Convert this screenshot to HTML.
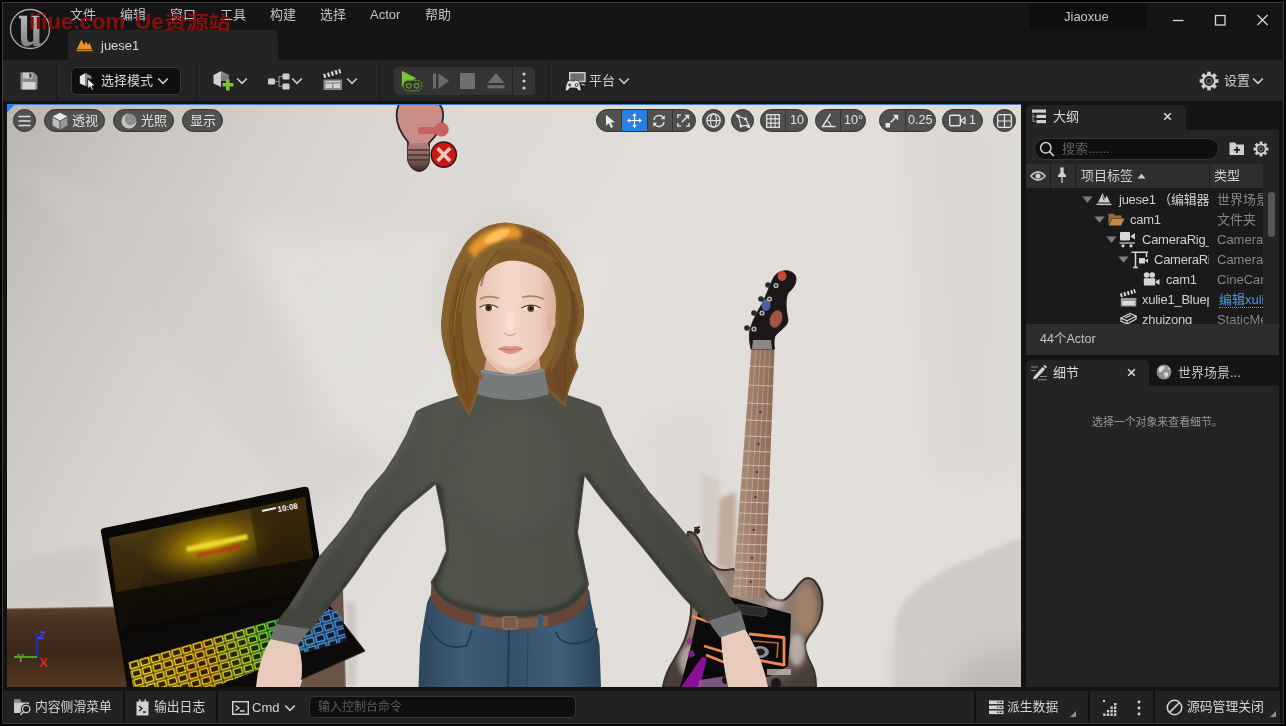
<!DOCTYPE html>
<html><head><meta charset="utf-8"><title>juese1 - Unreal Editor</title>
<style>
*{box-sizing:border-box;margin:0;padding:0}
html,body{width:1286px;height:726px;overflow:hidden;background:#000}
body{font-family:"Liberation Sans","Noto Sans CJK SC",sans-serif;font-size:13px;color:#c0c0c0;position:relative}
.abs{position:absolute}
#win{position:absolute;left:2px;top:2px;width:1282px;height:722px;background:#131313;border:1px solid #3a3a3a}
#title{position:absolute;left:3px;top:3px;width:1280px;height:58px;background:#151515}
#toolbar{position:absolute;left:3px;top:60px;width:1280px;height:41px;background:#242424}
.t{position:absolute;white-space:nowrap;line-height:1;will-change:transform}
svg{position:absolute;overflow:visible}
.m{top:8px;font-size:13px;color:#c4c4c4}
.sep{top:62px;width:1px;height:38px;background:#161616}
.chev path{fill:none;stroke:#cfcfcf;stroke-width:1.6}
.hd{top:164px;width:1px;height:24px;background:#1c1c1c}
.r{font-size:13px;color:#d0d0d0;letter-spacing:-0.25px}
.ty{font-size:13px;color:#868686;letter-spacing:0}
.bs{top:691px;width:2px;height:32px;background:#111}
.pill{top:109px;height:23px;background:#50504e;border:1px solid #353533;border-radius:11.5px}
.pt{top:114px;font-size:13px;color:#e2e2e2}
.pd{top:-1px;width:1px;height:23px;background:#363634}
</style></head><body>
<div id="win"></div>
<div id="title"></div>
<div id="toolbar"></div>

<div id="menu">
<span class="t m" style="left:70px">文件</span><span class="t m" style="left:120px">编辑</span><span class="t m" style="left:170px">窗口</span><span class="t m" style="left:220px">工具</span><span class="t m" style="left:270px">构建</span><span class="t m" style="left:320px">选择</span><span class="t m" style="left:370px">Actor</span><span class="t m" style="left:425px">帮助</span>
</div>
<div class="abs" style="left:68px;top:30px;width:210px;height:31px;background:#242424;border-radius:5px 5px 0 0"></div>
<svg style="left:76px;top:38px" width="17" height="14" viewBox="0 0 17 14"><path d="M1 11 L5.5 1.5 L8 7 L10 3.5 L12 7 L13.5 5 L16 11 Z" fill="#f0922c"/><rect x="0.5" y="11.6" width="16" height="1.6" fill="#c8901c"/></svg>
<span class="t" style="left:101px;top:39px;font-size:13px;color:#d6d6d6">juese1</span>
<!-- UE logo -->
<svg style="left:9px;top:8px" width="42" height="42" viewBox="0 0 42 42"><defs><linearGradient id="lg1" x1="0" y1="0" x2="0" y2="1"><stop offset="0" stop-color="#e8e8e8"/><stop offset="1" stop-color="#6a6a6a"/></linearGradient></defs><circle cx="21" cy="21" r="19.5" fill="#151515" stroke="#a8a8a8" stroke-width="1.3"/><text x="0" y="0" font-family="Liberation Serif, serif" font-weight="bold" font-size="46" text-anchor="middle" fill="url(#lg1)" transform="translate(21.5 38) scale(0.95 1.42)">u</text></svg>
<span class="t" id="wm" style="left:29px;top:11px;font-size:22.2px;font-weight:bold;color:#8a0d0d;letter-spacing:0px">iiiue.com<span style="display:inline-block;width:10px"></span>Ue<span style="display:inline-block;transform:scale(1.02,0.8);transform-origin:0 82%;letter-spacing:-0.6px">资源站</span></span>
<!-- user box -->
<div class="abs" style="left:1029px;top:3px;width:118px;height:28px;background:#0f0f0f;border-radius:0 0 6px 6px"></div>
<span class="t" style="left:1064px;top:10px;font-size:13px;color:#c8c8c8">Jiaoxue</span>
<svg style="left:1170px;top:10px" width="110" height="20" viewBox="0 0 110 20"><g stroke="#d8d8d8" stroke-width="1.3" fill="none"><path d="M3 10.5 H13.5"/><rect x="45.5" y="5.5" width="9.5" height="9.5"/><path d="M87.5 5 L97.5 15 M97.5 5 L87.5 15"/></g></svg>


<!-- save -->
<svg style="left:20px;top:72px" width="18" height="18" viewBox="0 0 18 18"><path d="M0.5 0.5 H14 L17.5 4 V17.5 H0.5 Z" fill="#8a8a8a"/><rect x="3" y="0.5" width="9.5" height="6" fill="#c9c9c9"/><rect x="9.3" y="1.5" width="2.2" height="4" fill="#3a3a3a"/><rect x="2.5" y="10" width="13" height="7.5" fill="#d4d4d4"/></svg>
<div class="abs sep" style="left:56px"></div>
<div class="abs" style="left:71px;top:67px;width:110px;height:28px;background:#0f0f0f;border:1px solid #3a3a3a;border-radius:5px"></div>
<svg style="left:79px;top:72px" width="18" height="19" viewBox="0 0 18 19"><path d="M0.8 4.2 L6.5 1 V14 L0.8 11.4 Z" fill="#e6e6e4"/><path d="M6.5 1 L12.4 4 V7.5 L8.5 5.5 V14 H6.5 Z" fill="#8e8e8c"/><path d="M8.8 6.8 L8.8 16.8 L11.2 14.6 L12.8 18.2 L14.4 17.5 L12.8 14 L16 13.8 Z" fill="#fff" stroke="#111" stroke-width="0.8"/></svg>
<span class="t" style="left:101px;top:74px;font-size:13px;color:#d8d8d8">选择模式</span>
<svg class="chev" style="left:157px;top:77px" width="12" height="8" viewBox="0 0 12 8"><path d="M1.2 1.5 L6 6.3 L10.8 1.5"/></svg>
<div class="abs sep" style="left:196px"></div>
<!-- add -->
<svg style="left:213px;top:70px" width="21" height="21" viewBox="0 0 21 21"><path d="M0.5 5 L8 1 V17 L0.5 13.5 Z" fill="#d0d0d0"/><path d="M8 1 L16 5 V10 H8 Z" fill="#8a8a8a"/><path d="M8 5.5 H16 V11 H8 Z" fill="#7a7a7a"/><path d="M13 9.5 H16.5 V13 H20.5 V16.5 H16.5 V20.5 H13 V16.5 H9.5 V13 H13 Z" fill="#7ec23c"/></svg>
<svg class="chev" style="left:236px;top:77px" width="12" height="8" viewBox="0 0 12 8"><path d="M1.2 1.5 L6 6.3 L10.8 1.5"/></svg>
<!-- blueprint -->
<svg style="left:268px;top:73px" width="22" height="17" viewBox="0 0 22 17"><path d="M7 8.5 H11 M11 3.5 V13.5 M11 3.5 H15 M11 13.5 H15" stroke="#8a8a8a" stroke-width="1.2" fill="none"/><rect x="0" y="5.5" width="7" height="6" rx="1.2" fill="#cfcfcf"/><rect x="14.5" y="0.5" width="7" height="6" rx="1.2" fill="#cfcfcf"/><rect x="14.5" y="10.5" width="7" height="6" rx="1.2" fill="#cfcfcf"/></svg>
<svg class="chev" style="left:291px;top:77px" width="12" height="8" viewBox="0 0 12 8"><path d="M1.2 1.5 L6 6.3 L10.8 1.5"/></svg>
<!-- clapboard -->
<svg style="left:323px;top:71px" width="20" height="19" viewBox="0 0 20 19"><rect x="0.5" y="8.5" width="18.5" height="10.5" fill="#8a8a8a"/><rect x="2.5" y="12.5" width="6.5" height="4.5" fill="#d2d2d2"/><rect x="10.5" y="12.5" width="6.5" height="4.5" fill="#d2d2d2"/><rect x="2.5" y="10" width="14.5" height="1.2" fill="#d2d2d2"/><g fill="#d8d8d8" transform="rotate(-17 0.5 8)"><rect x="1.5" y="3.2" width="2.2" height="4.3"/><rect x="5.5" y="3.2" width="2.2" height="4.3"/><rect x="9.5" y="3.2" width="2.2" height="4.3"/><rect x="13.5" y="3.2" width="2.2" height="4.3"/><rect x="17.3" y="3.2" width="2" height="4.3"/></g></svg>
<svg class="chev" style="left:346px;top:77px" width="12" height="8" viewBox="0 0 12 8"><path d="M1.2 1.5 L6 6.3 L10.8 1.5"/></svg>
<div class="abs sep" style="left:379px"></div>
<!-- play group -->
<div class="abs" style="left:394px;top:67px;width:141px;height:28px;background:#343432;border-radius:5px"></div>
<div class="abs" style="left:512px;top:67px;width:1px;height:28px;background:#242424"></div>
<svg style="left:401px;top:70px" width="22" height="22" viewBox="0 0 22 22"><path d="M0.8 0.7 L15.2 8.3 L0.8 16.5 Z" fill="#7cc13a"/><rect x="2" y="10.3" width="19" height="10.6" rx="5.3" fill="#343432" stroke="#6fb431" stroke-width="1" stroke-dasharray="2.2 1"/><circle cx="7.7" cy="15.7" r="2.3" fill="none" stroke="#7cc13a" stroke-width="1.5" stroke-dasharray="0.9 0.55"/><circle cx="15.6" cy="15.7" r="2.3" fill="none" stroke="#7cc13a" stroke-width="1.5" stroke-dasharray="0.9 0.55"/></svg>
<svg style="left:432px;top:72px" width="18" height="18" viewBox="0 0 18 18"><rect x="1" y="1.5" width="3" height="15" fill="#6c6c6c"/><path d="M6.5 1.5 L17 9 L6.5 16.5 Z" fill="#6c6c6c"/></svg>
<div class="abs" style="left:460px;top:73px;width:15px;height:16px;background:#707070"></div>
<svg style="left:487px;top:72px" width="18" height="18" viewBox="0 0 18 18"><path d="M9 1 L17.5 11 H0.5 Z" fill="#6c6c6c"/><rect x="0.5" y="13.2" width="17" height="3.2" fill="#6c6c6c"/></svg>
<svg style="left:521px;top:71px" width="6" height="20" viewBox="0 0 6 20"><circle cx="3" cy="3" r="1.6" fill="#d0d0d0"/><circle cx="3" cy="10" r="1.6" fill="#d0d0d0"/><circle cx="3" cy="17" r="1.6" fill="#d0d0d0"/></svg>
<div class="abs sep" style="left:548px"></div>
<!-- platform -->
<svg style="left:565px;top:71px" width="21" height="21" viewBox="0 0 21 21"><rect x="4.7" y="1.7" width="15.3" height="8.8" fill="#6e6e6c" stroke="#d0d0d0" stroke-width="1.4"/><path d="M16.5 13.2 L20 14" stroke="#d0d0d0" stroke-width="1.2"/><path d="M3.8 9.6 Q6 8.6 7.5 10 H9 Q10.5 8.6 12.8 9.6 Q14.6 10.5 15.2 14 L16 18.4 Q15.6 20.6 13.6 19.6 L11.4 17 H5 L2.8 19.6 Q0.8 20.6 0.4 18.4 L1.2 14 Q1.8 10.5 3.8 9.6 Z" fill="#e0e0de" stroke="#242424" stroke-width="0.8"/><path d="M3 14 H6.4 M4.7 12.3 V15.7" stroke="#2a2a2a" stroke-width="1"/><circle cx="11.6" cy="14" r="1.5" fill="none" stroke="#2a2a2a" stroke-width="0.9"/></svg>
<span class="t" style="left:589px;top:74px;font-size:13px;color:#d0d0d0">平台</span>
<svg class="chev" style="left:618px;top:77px" width="12" height="8" viewBox="0 0 12 8"><path d="M1.2 1.5 L6 6.3 L10.8 1.5"/></svg>
<!-- settings -->
<svg style="left:1199px;top:71px" width="20" height="20" viewBox="-11 -11 22 22"><g fill="#cfcfcf"><g id="teeth"><rect x="-2" y="-10.3" width="4" height="4.5"/><rect x="-2" y="5.8" width="4" height="4.5"/></g><use href="#teeth" transform="rotate(45)"/><use href="#teeth" transform="rotate(90)"/><use href="#teeth" transform="rotate(135)"/></g><circle r="6.6" fill="none" stroke="#cfcfcf" stroke-width="2.4"/><circle r="3" fill="none" stroke="#8a8a8a" stroke-width="1"/></svg>
<span class="t" style="left:1224px;top:74px;font-size:13px;color:#d0d0d0">设置</span>
<svg class="chev" style="left:1252px;top:77px" width="12" height="8" viewBox="0 0 12 8"><path d="M1.2 1.5 L6 6.3 L10.8 1.5"/></svg>


<div class="abs" style="left:7px;top:104px;width:1014px;height:583px;overflow:hidden;background:#dcdad6">
<svg style="left:0;top:0" width="1014" height="583" viewBox="7 104 1014 583">
<defs>
<linearGradient id="wall" gradientUnits="userSpaceOnUse" x1="7" y1="104" x2="883" y2="586"><stop offset="0" stop-color="#b9b6b1"/><stop offset="0.14" stop-color="#cac7c3"/><stop offset="0.28" stop-color="#d7d4d0"/><stop offset="0.42" stop-color="#dddad6"/><stop offset="0.6" stop-color="#e1deda"/><stop offset="1" stop-color="#e2dfdb"/></linearGradient>
<filter id="b2" x="-20%" y="-20%" width="140%" height="140%"><feGaussianBlur stdDeviation="2"/></filter>
<filter id="b1" x="-20%" y="-20%" width="140%" height="140%"><feGaussianBlur stdDeviation="0.8"/></filter>
<filter id="b6" x="-30%" y="-30%" width="160%" height="160%"><feGaussianBlur stdDeviation="6"/></filter>
<filter id="b15" x="-50%" y="-50%" width="200%" height="200%"><feGaussianBlur stdDeviation="15"/></filter>
</defs>
<rect x="7" y="104" width="1014" height="583" fill="url(#wall)"/>

<g id="wallshade">
<path d="M893 700 L895 625 C 900 585 950 566 1030 534 L1030 700 Z" fill="#cbc8c4" opacity="0.8" filter="url(#b2)"/>
<ellipse cx="1020" cy="690" rx="70" ry="40" fill="#b4aca4" opacity="0.6" filter="url(#b15)"/>
<path d="M886 640 L940 640 L940 687 L886 687 Z" fill="#d2cfcb" opacity="0.5" filter="url(#b6)"/>

<path d="M20 170 L235 232 L380 470 L300 520 Z" fill="#cfccc8" opacity="0.35" filter="url(#b6)"/>
<path d="M240 230 L620 250 L560 420 L330 440 Z" fill="#e6e4e0" opacity="0.5" filter="url(#b15)"/>
<path d="M7 560 L100 545 L100 608 L7 608 Z" fill="#c6c3bf" opacity="0.55" filter="url(#b6)"/>
<path d="M900 104 L1021 104 L1021 480 L930 480 Z" fill="#d6d3cf" opacity="0.5" filter="url(#b15)"/>
<path d="M640 420 L720 400 L735 560 L660 600 Z" fill="#d4d1cd" opacity="0.3" filter="url(#b15)"/>
</g>


<g id="table">
<defs><linearGradient id="tb" x1="0" y1="0" x2="0" y2="1"><stop offset="0" stop-color="#5a4030"/><stop offset="0.2" stop-color="#46301f"/><stop offset="0.6" stop-color="#3c2719"/><stop offset="1" stop-color="#553920"/></linearGradient></defs>
<path d="M7 609 L122 607 L135 687 L7 687 Z" fill="url(#tb)"/>
<path d="M7 609 L122 607" stroke="#7a6050" stroke-width="1.5" opacity="0.7"/>
<path d="M328 600 L343 590 L346 687 L300 687 Z" fill="#6a5446"/>
<path d="M346 600 L356 604 L356 687 L346 687 Z" fill="#c4c0bb" opacity="0.7" filter="url(#b2)"/>
</g>


<g id="laptop">
<defs>
<linearGradient id="scr" x1="0" y1="0" x2="0.25" y2="1"><stop offset="0" stop-color="#5a4610"/><stop offset="0.3" stop-color="#4a3810"/><stop offset="0.62" stop-color="#2e220c"/><stop offset="1" stop-color="#120e06"/></linearGradient>
<radialGradient id="glow" cx="0.5" cy="0.5" r="0.5"><stop offset="0" stop-color="#e8c800" stop-opacity="0.95"/><stop offset="0.5" stop-color="#a88400" stop-opacity="0.6"/><stop offset="1" stop-color="#6a5000" stop-opacity="0"/></radialGradient>
<linearGradient id="kb" gradientUnits="userSpaceOnUse" x1="128" y1="670" x2="340" y2="615"><stop offset="0" stop-color="#ffe020"/><stop offset="0.35" stop-color="#ffc020"/><stop offset="0.55" stop-color="#b8e030"/><stop offset="0.68" stop-color="#60e040"/><stop offset="0.8" stop-color="#50a0e0"/><stop offset="1" stop-color="#4a90f0"/></linearGradient>
<pattern id="keys" width="11" height="9" patternUnits="userSpaceOnUse" patternTransform="rotate(-14) skewX(-28)"><rect x="1.2" y="1.2" width="8.6" height="6.6" fill="#0c0a08" stroke="url(#kb)" stroke-width="1.4"/></pattern>
</defs>
<!-- base -->
<path d="M119 634 L292 596 L330 606 L365 651 L300 680 L296 687 L127 687 Z" fill="#0d0b0a"/>
<path d="M330 606 L365 651 L300 680" stroke="#2a2724" stroke-width="1" fill="none"/>
<!-- keyboard area: gradient-lit keys -->
<pattern id="keyring" width="11" height="8.8" patternUnits="userSpaceOnUse" patternTransform="matrix(0.960 -0.279 0.243 0.970 128 662)"><rect x="1.3" y="1.3" width="8.4" height="6.2" fill="none" stroke="#fff" stroke-width="1.5"/></pattern>
<mask id="kmask" maskUnits="userSpaceOnUse" x="100" y="590" width="280" height="100"><path d="M128 662 L283 617 L318 606 L340 612 L347 641 L300 654 L215 687 L133 687 Z" fill="url(#keyring)"/></mask>
<path d="M128 662 L283 617 L318 606 L340 612 L347 641 L300 654 L215 687 L133 687 Z" fill="url(#kb)" mask="url(#kmask)"/>
<path d="M128 662 L283 617 L318 606 L340 612 L347 641 L300 654 L215 687 L133 687 Z" fill="url(#kb)" opacity="0.12"/>
<!-- screen bezel -->
<path d="M101 532 Q100 529 104 528 L303 487 Q308 486 309 490 L321 566 L296 597 L119 637 Z" fill="#0a0908"/>
<!-- display -->
<path d="M109 538 L305 497 L315 572 L293 592 L121 631 Z" fill="url(#scr)"/>
<ellipse cx="210" cy="545" rx="72" ry="32" fill="url(#glow)" transform="rotate(-11 210 545)"/>
<path d="M109 538 L150 560 L121 631 Z" fill="#3a2c0c" opacity="0.5"/>
<path d="M250 509 L305 497 L313 560 L262 580 Z" fill="#2a1e08" opacity="0.55"/>
<path d="M186 547 L247 534 L248 539 L187 552 Z" fill="#f0d830" filter="url(#b1)"/>
<path d="M196 553 L240 544 L241 549 L197 558 Z" fill="#b03018" opacity="0.7" filter="url(#b1)"/>
<path d="M116 592 L314 558 L315 572 L293 592 L121 631 Z" fill="#0c0a06" opacity="0.8"/>
<text x="278" y="512" font-size="8" font-weight="bold" fill="#f4f4f4" transform="rotate(-10 278 512)" font-family="Liberation Sans, sans-serif">10:08</text>
<path d="M262 511 L276 508" stroke="#e8e8e8" stroke-width="2"/>
</g>


<g id="guitar">
<defs>
<linearGradient id="neck" x1="0" y1="0" x2="1" y2="0"><stop offset="0" stop-color="#b09684"/><stop offset="0.45" stop-color="#a07e6a"/><stop offset="1" stop-color="#8c6a58"/></linearGradient>
<radialGradient id="gbody" cx="0.5" cy="0.45" r="0.6"><stop offset="0" stop-color="#9a8a80"/><stop offset="0.7" stop-color="#857469"/><stop offset="1" stop-color="#4a3e38"/></radialGradient>
</defs>
<!-- stand / shadow behind neck -->
<path d="M719 498 L736 492 L735 572 L716 566 Z" fill="#b99c8a" opacity="0.75" filter="url(#b2)"/>
<path d="M700 470 L720 480 L716 560 L702 560 Z" fill="#cfc6be" opacity="0.6" filter="url(#b2)"/>
<!-- body -->
<path d="M688 532 C694 531 699 538 701 546 C703 556 708 564 718 569 C724 571 729 570 733 569 L765 590 C770 598 778 602 784 600 C792 596 796 586 802 581 C806 577 812 577 816 583 C823 592 824 606 820 618 C816 630 806 636 805 645 C805 656 812 664 814 671 C816 678 816 684 816 687 L663 687 C665 676 670 666 674 660 C680 650 684 644 686 636 C690 624 692 612 691 602 C688 580 684 550 688 532 Z" fill="url(#gbody)" stroke="#3a302c" stroke-width="2.2"/>
<!-- mottling -->
<ellipse cx="806" cy="610" rx="11" ry="24" fill="#a88468" opacity="0.8" filter="url(#b2)"/>
<ellipse cx="797" cy="650" rx="8" ry="16" fill="#c4bcb4" opacity="0.8" filter="url(#b2)"/>
<ellipse cx="690" cy="662" rx="11" ry="16" fill="#bcb2aa" opacity="0.8" filter="url(#b2)"/>
<ellipse cx="712" cy="582" rx="12" ry="9" fill="#b8a89c" opacity="0.7" filter="url(#b2)"/>
<ellipse cx="775" cy="604" rx="9" ry="5" fill="#c8c0b8" opacity="0.7" filter="url(#b2)"/>
<ellipse cx="697" cy="560" rx="5" ry="18" fill="#5e4c42" opacity="0.7" filter="url(#b2)"/>
<!-- pickguard -->
<path d="M700 604 L730 597 L766 607 L791 614 L790 640 L788 666 L770 676 L728 687 L680 687 L690 650 L696 622 Z" fill="#0c0b0c"/>
<!-- orange lines -->
<path d="M749 634 L784 637.5 L784 665 L757 660 M692 616 L709 622 M704 646 L724 652 M706 655 L726 663" stroke="#f08850" stroke-width="2.8" fill="none" stroke-linejoin="round"/>
<path d="M753 641 L778 643 L777 658" stroke="#e87840" stroke-width="1.6" fill="none" opacity="0.8"/>
<!-- purple -->
<path d="M702 657 L707 658 L700 687 L681 687 Z" fill="#8a109a"/>
<path d="M686 640 l4 -3 l3 5 l-5 3z M688 652 l5 -2 l2 6 l-6 2z" fill="#9a20a8" opacity="0.8"/>
<path d="M700 680 L726 676 L728 687 L698 687 Z" fill="#a878b0" opacity="0.7"/>
<!-- pickup -->
<rect x="734" y="606" width="33" height="9" rx="4" fill="#2c2c2e" stroke="#484848" stroke-width="0.8" transform="rotate(7 750 610)"/>
<ellipse cx="760" cy="652" rx="9" ry="6" fill="#a8a8a8" opacity="0.85"/><ellipse cx="760" cy="652" rx="5" ry="3.5" fill="#202020"/>
<rect x="767" y="669" width="24" height="6" fill="#c8c0b8" opacity="0.75"/>
<!-- knobs -->
<circle cx="742" cy="682" r="5" fill="#1a1a1a"/><circle cx="776" cy="683" r="5" fill="#1a1a1a"/><circle cx="726" cy="680" r="4" fill="#1a1a1a"/>
<!-- neck -->
<path d="M751.5 347 L774.5 348 L765 598 L732.5 596 Z" fill="url(#neck)"/>
<g stroke="#d6cabe" stroke-width="0.9" opacity="0.85"><path d="M750.1 366 L773.8 367.0 M748.6 385 L773.1 386.0 M747.2 403 L772.4 404.0 M745.9 420 L771.8 421.0 M744.7 436 L771.2 437.0 M743.6 451 L770.6 452.0 M742.5 465 L770.1 466.0 M741.5 478 L769.6 479.0 M740.6 490 L769.1 491.0 M739.7 502 L768.6 503.0 M738.8 513 L768.2 514.0 M738.0 524 L767.8 525.0 M737.2 534 L767.4 535.0 M736.5 544 L767.1 545.0 M735.8 553 L766.7 554.0 M735.1 562 L766.4 563.0 M734.5 570 L766.1 571.0 M733.9 578 L765.8 579.0 M733.3 586 L765.5 587.0"/></g>
<g stroke="#ddd6ce" stroke-width="0.6" opacity="0.55"><path d="M756.1 348 L739.0 597 M760.7 348 L745.5 597 M765.3 348 L752.0 597 M769.9 348 L758.5 597"/></g>
<g fill="#4a3e3a"><circle cx="760.3" cy="412" r="1.2"/><circle cx="758.5" cy="444" r="1.2"/><circle cx="756.9" cy="472" r="1.2"/><circle cx="755.4" cy="497" r="1.2"/><circle cx="753.6" cy="530" r="1.2"/><circle cx="752.0" cy="558" r="1.2"/><circle cx="750.6" cy="582" r="1.2"/></g>
<!-- headstock -->
<path d="M751 349 C749 340 749 334 750 330 C752 322 757 312 762 304 C767 294 770 284 774 277 C778 270 790 268 795 275 C798 281 794 288 788 293 C785 300 786 310 788 320 C788 326 780 330 775 336 C773.5 341 774 345 774.5 349 Z" fill="#1c1718" stroke="#141010" stroke-width="0.8"/>
<ellipse cx="782" cy="276" rx="4.5" ry="5" fill="#c8483a"/>
<ellipse cx="766" cy="305" rx="4.5" ry="6" fill="#4a6ab0" opacity="0.9"/>
<ellipse cx="776" cy="319" rx="6" ry="9" fill="#b0584c" opacity="0.9" transform="rotate(20 776 319)"/>
<path d="M753 340 L771 340 L772 349 L752 349 Z" fill="#9a948e" opacity="0.9"/>
<g fill="#2a2a2c"><circle cx="768" cy="285" r="2.8"/><circle cx="761" cy="299" r="2.8"/><circle cx="754" cy="313" r="2.8"/><circle cx="747" cy="328" r="2.8"/></g>
<g fill="#b8b8b8"><circle cx="776" cy="285.5" r="2.6"/><circle cx="769.5" cy="299" r="2.6"/><circle cx="762" cy="313" r="2.6"/><circle cx="754" cy="329" r="2.6"/></g>
<g fill="#3a3a3c"><circle cx="776" cy="285.5" r="1.2"/><circle cx="769.5" cy="299" r="1.2"/><circle cx="762" cy="313" r="1.2"/><circle cx="754" cy="329" r="1.2"/></g>
<!-- strap button -->
<circle cx="697" cy="531" r="3" fill="#2a2626"/><path d="M694 528 L700 527" stroke="#2a2626" stroke-width="1.5"/>
</g>


<g id="person">
<defs>
<linearGradient id="sw" x1="0" y1="0" x2="1" y2="0"><stop offset="0" stop-color="#42433c"/><stop offset="0.35" stop-color="#52534b"/><stop offset="0.7" stop-color="#4e4f47"/><stop offset="1" stop-color="#40413a"/></linearGradient>
<linearGradient id="swL" x1="0" y1="1" x2="1" y2="0"><stop offset="0" stop-color="#43443d"/><stop offset="1" stop-color="#3d3e38"/></linearGradient>
<linearGradient id="jeans" x1="0" y1="0" x2="1" y2="0"><stop offset="0" stop-color="#2e465c"/><stop offset="0.25" stop-color="#3e5d79"/><stop offset="0.5" stop-color="#34516a"/><stop offset="0.78" stop-color="#3f5e7a"/><stop offset="1" stop-color="#2b4258"/></linearGradient>
<radialGradient id="hairg" cx="0.42" cy="0.08" r="0.25"><stop offset="0" stop-color="#f0a030"/><stop offset="0.5" stop-color="#c97a22"/><stop offset="1" stop-color="#8c5c28"/></radialGradient>
<linearGradient id="faceg" x1="0" y1="0" x2="1" y2="0"><stop offset="0" stop-color="#e6c3b0"/><stop offset="0.4" stop-color="#f3d8ca"/><stop offset="0.8" stop-color="#eccbb9"/><stop offset="1" stop-color="#d9ac96"/></linearGradient>
</defs>
<!-- hair glow/halo -->
<ellipse cx="505" cy="300" rx="74" ry="92" fill="#cfc9c0" opacity="0.3" filter="url(#b6)"/>
<!-- jeans -->
<path d="M430 596 L427 603 L420 645 L418.5 687 L601 687 L599.5 645 L590.5 600 L589 590 Z" fill="url(#jeans)"/>
<path d="M509 630 L508 687" stroke="#243a4e" stroke-width="2" fill="none"/>
<path d="M528 632 L527 687" stroke="#2c445a" stroke-width="1" fill="none"/>
<path d="M428 625 Q440 652 466 646 Q470 638 472 630 M556 632 Q562 650 590 640 Q596 636 597 628" stroke="#22384a" stroke-width="1.6" fill="none"/>
<!-- hands -->
<ellipse cx="276" cy="685" rx="11" ry="6" fill="#141210"/>
<path d="M271 638 L298 644 Q305 665 300 687 L256 687 Q258 660 271 638 Z" fill="#e9cbbb"/>
<path d="M721 636 L745 629 Q762 656 768 687 L728 687 Q722 660 721 636 Z" fill="#e9cbbb"/>
<!-- sweater -->
<path d="M482 388 C462 398 432 402 417 412 L407 435 L396 455 L385 472 L366 494 L352 517 L337 537 L320 557 L305 582 L290 606 L280 619 L276 625 L310 630 L324 611 L339 594 L354 574 L369 552 L384 532 L401 512 L419 497 L436 483 L444 521 L447 551 L438 572 L431.6 582 C436 600 455 608 469 611.5 C485 615 500 617.5 509.4 617.6 C525 617.6 540 616 550 614.5 C568 611 584 600 588 584 L586 575 L577 533 L584 474 L601 497 L622 522 L643 547 L663 572 L684 597 L703 617 L709 622 L741 612 L733 604 L713 572 L692 543 L671 518 L649 493 L628 464 L612 436 L600 408 C585 400 562 396 545 388 Z" fill="url(#sw)" stroke="url(#sw)" stroke-width="2" stroke-linejoin="round"/>
<!-- subtle torso highlights -->
<clipPath id="swclip"><path d="M482 388 C462 398 432 402 417 412 L407 435 L396 455 L385 472 L366 494 L352 517 L337 537 L320 557 L305 582 L290 606 L280 619 L276 625 L310 630 L324 611 L339 594 L354 574 L369 552 L384 532 L401 512 L419 497 L436 483 L444 521 L447 551 L438 572 L431.6 582 C436 600 455 608 469 611.5 C485 615 500 617.5 509.4 617.6 C525 617.6 540 616 550 614.5 C568 611 584 600 588 584 L586 575 L577 533 L584 474 L601 497 L622 522 L643 547 L663 572 L684 597 L703 617 L709 622 L741 612 L733 604 L713 572 L692 543 L671 518 L649 493 L628 464 L612 436 L600 408 C585 400 562 396 545 388 Z"/></clipPath>
<g clip-path="url(#swclip)">
<ellipse cx="512" cy="470" rx="55" ry="65" fill="#5a5b52" opacity="0.5" filter="url(#b6)"/>
<path d="M438 484 L446 550 L434 584" stroke="#2f302b" stroke-width="7" fill="none" filter="url(#b2)" opacity="0.8"/>
<path d="M584 476 L577 535 L588 580" stroke="#2f302b" stroke-width="7" fill="none" filter="url(#b2)" opacity="0.8"/>
<path d="M417 414 L407 437 L396 457 L385 474 L366 496 L352 519 L337 539 L320 559 L305 584 L290 608" stroke="#5a5b52" stroke-width="10" fill="none" filter="url(#b2)" opacity="0.6"/>
<path d="M600 410 L612 438 L628 466 L649 495 L671 520 L692 545 L713 574" stroke="#55564e" stroke-width="10" fill="none" filter="url(#b2)" opacity="0.5"/>
<path d="M436 485 L419 499 L401 514 L384 534 L369 554 L354 576 L339 596 L324 613" stroke="#2f302b" stroke-width="8" fill="none" filter="url(#b2)" opacity="0.7"/>
<path d="M584 476 L601 499 L622 524 L643 549 L663 574 L684 599 L703 619" stroke="#2f302b" stroke-width="8" fill="none" filter="url(#b2)" opacity="0.7"/>
<path d="M434 584 C440 600 458 606 470 608.5 C486 612 500 614 509 614 C525 614 540 612.5 550 611 C566 608 580 598 586 584" stroke="#2c2d28" stroke-width="5" fill="none" filter="url(#b2)" opacity="0.75"/>
</g>
<!-- cuffs -->
<path d="M276 624 L310 629 L298 645 L270 639 Z" fill="#6f7171"/>
<path d="M708 621 L740.5 611 L746 629 L720 637.5 Z" fill="#6f7171"/>
<!-- belt -->
<path d="M431.6 582 C436 600 455 608 469 611.5 C485 615 500 617.5 509.4 617.6 C525 617.6 540 616 550 614.5 C568 611 584 600 588 584 L588.5 600 C584 614 568 623 550 626.7 C540 628.5 525 629.8 509.4 629.8 C500 629.8 485 628 469 624.7 C455 621 436 613 430.5 598.4 Z" fill="#664636"/>
<path d="M478 614 C490 617 500 618.5 509.4 618.8 C525 618.8 540 617 548 615.5 L548 626 C540 627.5 525 628.6 509.4 628.6 C500 628.6 490 627.5 478 625 Z" fill="#7c5a48"/>
<rect x="503" y="617" width="14" height="12" rx="2" fill="none" stroke="#8a7464" stroke-width="1.4"/>
<rect x="476" y="613" width="5" height="19" rx="1.5" fill="#3d5a76"/><rect x="538" y="614" width="5" height="18" rx="1.5" fill="#3d5a76"/>
<!-- hair back -->
<path d="M505 223 C482 224 467 238 461 252 C450 270 445 290 442 318 C440 340 447 355 451 365 C452 385 460 400 469 415 C474 402 480 388 483 376 L536 376 C545 387 555 397 565 406 C566 392 572 380 578 366 C574 356 574 346 577 338 C585 326 585 306 580 292 C577 275 571 262 563 254 C555 240 540 226 505 223 Z" fill="#86602f" stroke="#86602f" stroke-width="1.2"/>
<path d="M560 262 C575 285 584 310 574 338 C570 350 574 360 576 368 C570 380 567 392 565 404 C556 396 548 388 540 378 C556 360 566 330 562 300 C560 285 556 272 550 262 Z" fill="#6b4520" opacity="0.75" filter="url(#b1)"/>
<path d="M466 262 C452 290 444 325 452 362 C454 384 461 400 469 413 C472 400 478 388 482 376 C470 350 466 310 474 280 Z" fill="#73491f" opacity="0.7" filter="url(#b1)"/>
<path d="M520 228 C545 232 560 250 568 272 C556 258 540 246 520 242 Z" fill="#6e4822" opacity="0.7" filter="url(#b1)"/>
<g stroke="#5e3e1c" stroke-width="1.3" fill="none" opacity="0.55">
<path d="M458 290 C452 320 452 350 460 380"/><path d="M464 300 C460 330 462 360 468 392"/><path d="M572 290 C576 310 574 330 568 348"/><path d="M566 350 C564 370 566 385 564 398"/><path d="M556 366 C556 378 560 388 562 396"/><path d="M530 232 C548 238 560 254 566 270"/>
</g>
<g stroke="#a87a3c" stroke-width="1.2" fill="none" opacity="0.6">
<path d="M470 262 C460 285 454 310 454 335"/><path d="M478 250 C468 268 462 290 460 312"/><path d="M548 244 C560 256 568 272 574 292"/>
</g>
<path d="M468 250 C476 236 492 226 512 226 C520 228 524 232 520 238 C504 238 486 244 474 258 Z" fill="#e8952c" filter="url(#b2)"/>
<ellipse cx="497" cy="236" rx="14" ry="5" fill="#ffc860" transform="rotate(-26 497 236)" filter="url(#b1)" opacity="0.85"/>
<!-- neck skin -->
<path d="M488 350 L538 350 L541 370 Q512 380 484 370 Z" fill="#cfa590"/>
<!-- collar -->
<path d="M481 369 Q512 378 544 368 L549 394 Q515 406 477 394 Z" fill="#787b7c"/>
<path d="M481 371 Q512 380 544 370" stroke="#8e9192" stroke-width="1.5" fill="none"/>
<!-- face -->
<path d="M476 305 C475 278 490 261 516 260 C544 260 557 282 556 308 C555 330 550 345 540 357 C531 368 521 374 511 374 C501 374 491 367 485 356 C479 345 476 325 476 305 Z" fill="url(#faceg)"/>
<ellipse cx="551" cy="322" rx="4.5" ry="9" fill="#e0b29c"/>
<!-- hair front strands -->
<path d="M503 249 C486 257 477 278 475 312 C473 345 478 365 484 382 C470 372 461 350 462 318 C462 285 476 256 503 249 Z" fill="#86602f"/>
<path d="M503 249 C528 247 550 262 558 298 C560 320 558 345 549 374 C560 360 571 335 571 305 C569 270 545 244 503 249 Z" fill="#7e5a2b"/>
<path d="M497 251 C512 246 536 252 550 276 C536 262 516 258 497 262 Z" fill="#7e5a2b"/>
<path d="M500 250 C490 258 484 270 481 286" stroke="#6e4620" stroke-width="2" fill="none" opacity="0.6"/>
<!-- face details -->
<path d="M480 308 Q488 302 497.5 308 Q488 312.5 480 308 Z" fill="#f4ece6"/><path d="M522 308.5 Q531 302.5 540 308.5 Q531 313 522 308.5 Z" fill="#f4ece6"/>
<circle cx="488.6" cy="307.8" r="3.4" fill="#5a4028"/><circle cx="530.8" cy="308.4" r="3.4" fill="#5a4028"/>
<circle cx="488.6" cy="307.8" r="1.6" fill="#1e140e"/><circle cx="530.8" cy="308.4" r="1.6" fill="#1e140e"/>
<path d="M479.5 307.5 Q488 301.5 498 307.5 M521.5 308 Q531 302 540.5 308" stroke="#4a3020" stroke-width="1.1" fill="none"/>
<path d="M480 299 Q489 294.5 499 298.5 M522 297.5 Q533 294 544 299" stroke="#9a7452" stroke-width="1.8" fill="none" opacity="0.8"/>
<path d="M498 348.6 Q504 345 510.4 346.6 Q517 345 523 348.6 Q517 354 510.4 354 Q504 354 498 348.6 Z" fill="#dc9488"/>
<path d="M498.5 348.8 Q510.4 350.5 522.5 348.8" stroke="#b86c64" stroke-width="0.9" fill="none"/>
<path d="M504.5 333.5 Q510 337.5 515.5 333.5" stroke="#cfa08c" stroke-width="1.5" fill="none"/>
<ellipse cx="510.5" cy="322" rx="3.6" ry="11" fill="#f9e6da" opacity="0.7" filter="url(#b1)"/>
<path d="M483 352 Q495 372 511 375 Q528 372 541 352 Q530 366 511 369 Q494 366 483 352 Z" fill="#d8ae9a" opacity="0.6" filter="url(#b1)"/>
</g>


<g id="bulb"><defs><linearGradient id="bb" x1="0" y1="0" x2="0" y2="1"><stop offset="0" stop-color="#a87a76"/><stop offset="0.6" stop-color="#7a5a54"/><stop offset="1" stop-color="#3e2e2a"/></linearGradient></defs>
<path d="M399 104 C393 118 398 130 408 142 L408 160 C410 168 416 171 419 171 C424 171 429 166 429 160 L429 143 C438 134 444 124 443 114 C443 110 441 106 439 104 Z" fill="#c98e8a" stroke="#2a2624" stroke-width="1.8"/>
<path d="M408 146 L429 146 L429 160 C429 166 424 170 419 170 C414 170 409 166 408 160 Z" fill="url(#bb)"/>
<path d="M408 150 H429 M408 155 H429 M408 160 H429" stroke="#4a3430" stroke-width="1.5"/>
<path d="M409 143 L428 143 L429 149 L408 149 Z" fill="#a87878" opacity="0.8"/>
<rect x="418" y="127" width="20" height="7" rx="2" fill="#c8625c"/>
<circle cx="441.5" cy="129.5" r="7.2" fill="#c8625c"/>
<circle cx="443.8" cy="154.6" r="12.6" fill="#d01414" stroke="#2a1a1a" stroke-width="1.4"/>
<path d="M437.5 148.3 L450.1 160.9 M450.1 148.3 L437.5 160.9" stroke="#f2ccb4" stroke-width="3.6"/>
</g>


<g id="gizmo" font-family="Liberation Sans, sans-serif" font-size="11" font-weight="bold">
<path d="M37 634 V658" stroke="#2030e0" stroke-width="1.6"/>
<path d="M14 657 H37" stroke="#50c030" stroke-width="1.6"/>
<text x="39" y="639" fill="#3a4af0" transform="skewX(-15) translate(170 0)">Z</text>
<text x="17" y="662" fill="#40b020">Y</text>
<text x="39" y="667" fill="#e02020" font-size="13">X</text>
</g>

</svg>
<!--VPUI-->
</div>
<div class="abs" style="left:7px;top:104px;width:1014px;height:1px;background:#3b7fcc"></div>
<svg style="left:7px;top:104px" width="9" height="9" viewBox="0 0 9 9"><path d="M0 0 H8.5 L0 8.5 Z" fill="#2a80e8"/></svg>



<div id="vpui">
<div class="abs pill" style="left:13px;width:23px"></div>
<svg style="left:18px;top:115px" width="13" height="12" viewBox="0 0 13 12"><path d="M0.5 1.5 H12.5 M0.5 6 H12.5 M0.5 10.5 H12.5" stroke="#e0e0e0" stroke-width="1.4"/></svg>
<div class="abs pill" style="left:44px;width:61px"></div>
<svg style="left:52px;top:112px" width="16" height="18" viewBox="0 0 16 18"><path d="M8 0.8 L15.4 4.6 L8 8.4 L0.6 4.6 Z" fill="#e8e8e8"/><path d="M0.6 5.6 L7.5 9.2 V17.2 L0.6 13.4 Z" fill="#bdbdbd"/><path d="M15.4 5.6 L8.5 9.2 V17.2 L15.4 13.4 Z" fill="#9a9a9a"/></svg>
<span class="t pt" style="left:72px">透视</span>
<div class="abs pill" style="left:113px;width:61px"></div>
<svg style="left:121px;top:113px" width="16" height="16" viewBox="0 0 16 16"><circle cx="8" cy="8" r="7.5" fill="#8e8e8c"/><path d="M8 0.5 A7.5 7.5 0 1 0 15.5 8 A6 6 0 1 1 8 0.5 Z" fill="#c4c4c2"/></svg>
<span class="t pt" style="left:141px">光照</span>
<div class="abs pill" style="left:182px;width:41px"></div>
<span class="t pt" style="left:190px">显示</span>
<!-- right tools -->
<div class="abs pill" style="left:596px;width:100px;overflow:hidden"><div class="abs" style="left:25px;top:-1px;width:25px;height:23px;background:#2a7fe4"></div><div class="abs pd" style="left:24px"></div><div class="abs pd" style="left:49.5px"></div><div class="abs pd" style="left:74.5px"></div></div>
<svg style="left:604.5px;top:114px" width="11" height="14.5" viewBox="0 0 12 16"><path d="M1 0.8 V13 L4.2 10.2 L6.6 15.4 L8.8 14.4 L6.4 9.4 L10.8 9.2 Z" fill="#ececec"/></svg>
<svg style="left:627px;top:113px" width="15" height="15" viewBox="0 0 17 17"><path d="M8.5 1 V16 M1 8.5 H16" stroke="#fff" stroke-width="1.4"/><path d="M8.5 0 L11 3.4 H6 Z M8.5 17 L11 13.6 H6 Z M0 8.5 L3.4 6 V11 Z M17 8.5 L13.6 6 V11 Z" fill="#fff"/></svg>
<svg style="left:652px;top:114px" width="14" height="14" viewBox="0 0 16 16"><path d="M2.2 7 A6 6 0 0 1 13 4.2 M13.8 9 A6 6 0 0 1 3 11.8" fill="none" stroke="#e4e4e4" stroke-width="1.6"/><path d="M14.6 1.4 V6 H10 Z M1.4 14.6 V10 H6 Z" fill="#e4e4e4"/></svg>
<svg style="left:677px;top:114px" width="13" height="13" viewBox="0 0 15 15"><path d="M1 4.5 V1 H4.5 M14 10.5 V14 H10.5 M1 10.5 V14 H4.5" fill="none" stroke="#e4e4e4" stroke-width="1.6"/><path d="M5.5 9.5 L12.5 2.5" stroke="#e4e4e4" stroke-width="1.6"/><path d="M8.6 1 H14 V6.4 Z" fill="#e4e4e4"/></svg>
<div class="abs pill" style="left:702px;width:23px"></div>
<svg style="left:706px;top:113px" width="15" height="15" viewBox="0 0 15 15"><circle cx="7.5" cy="7.5" r="6.6" fill="none" stroke="#e4e4e4" stroke-width="1.3"/><ellipse cx="7.5" cy="7.5" rx="3" ry="6.6" fill="none" stroke="#e4e4e4" stroke-width="1.2"/><path d="M1 7.5 H14" stroke="#e4e4e4" stroke-width="1.2"/></svg>
<div class="abs pill" style="left:731px;width:23px"></div>
<svg style="left:735px;top:113px" width="16" height="16" viewBox="0 0 16 16"><path d="M3.5 3.5 L10.5 5.8 L13.5 12 L6 13 Z" fill="none" stroke="#e4e4e4" stroke-width="1.2"/><path d="M0.5 1 L5 2.2 L2.2 5 Z M15.5 15.5 L11 14 L14 11 Z" fill="#e4e4e4"/><circle cx="10.5" cy="5.8" r="1.5" fill="#e4e4e4"/><circle cx="6" cy="13" r="1.5" fill="#e4e4e4"/></svg>
<div class="abs pill" style="left:760px;width:48px"><div class="abs pd" style="left:24px"></div></div>
<svg style="left:766px;top:114px" width="14" height="14" viewBox="0 0 14 14"><rect x="0.7" y="0.7" width="12.6" height="12.6" fill="none" stroke="#e4e4e4" stroke-width="1.3"/><path d="M4.9 0.7 V13.3 M9.1 0.7 V13.3 M0.7 4.9 H13.3 M0.7 9.1 H13.3" stroke="#e4e4e4" stroke-width="1.1"/></svg>
<span class="t pt" style="left:790px;font-size:12.5px">10</span>
<div class="abs pill" style="left:815px;width:51px"><div class="abs pd" style="left:24px"></div></div>
<svg style="left:821px;top:113px" width="15" height="15" viewBox="0 0 15 15"><path d="M9.5 1 L1.5 13.5 H14.5" fill="none" stroke="#e4e4e4" stroke-width="1.4"/><path d="M5.5 7.5 Q9.5 9.5 9.8 13.5" fill="none" stroke="#e4e4e4" stroke-width="1.2"/></svg>
<span class="t pt" style="left:844px;font-size:12.5px">10°</span>
<div class="abs pill" style="left:879px;width:57px"><div class="abs pd" style="left:24.5px"></div></div>
<svg style="left:885px;top:114px" width="14" height="14" viewBox="0 0 14 14"><rect x="0.5" y="9" width="4.5" height="4.5" fill="#e4e4e4"/><path d="M5.5 8.5 L11.5 2.5" stroke="#e4e4e4" stroke-width="1.6"/><path d="M7.6 0.8 H13.2 V6.4 Z" fill="#e4e4e4"/></svg>
<span class="t pt" style="left:908px;font-size:12.5px">0.25</span>
<div class="abs pill" style="left:942px;width:41px"></div>
<svg style="left:949px;top:114px" width="17" height="13" viewBox="0 0 17 13"><rect x="0.7" y="1.2" width="10.6" height="10.6" rx="1.2" fill="none" stroke="#e4e4e4" stroke-width="1.4"/><path d="M11.8 6.5 L16 3.5 V9.5 Z" fill="none" stroke="#e4e4e4" stroke-width="1.2"/></svg>
<span class="t pt" style="left:969px;font-size:12.5px">1</span>
<div class="abs pill" style="left:993px;width:23px"></div>
<svg style="left:997px;top:114px" width="15" height="14" viewBox="0 0 15 14"><rect x="0.7" y="0.7" width="13.6" height="12.6" rx="1.5" fill="none" stroke="#e4e4e4" stroke-width="1.3"/><path d="M7.5 0.7 V13.3 M0.7 7 H14.3" stroke="#e4e4e4" stroke-width="1.2"/></svg>
</div>
<div id="rp">
<div class="abs" style="left:1026px;top:105px;width:253px;height:26px;background:#151515"></div>
<div class="abs" style="left:1026px;top:105px;width:160px;height:26px;background:#242424;border-radius:5px 5px 0 0"></div>
<div class="abs" style="left:1026px;top:130px;width:253px;height:224px;background:#242424"></div>
<svg style="left:1032px;top:109px" width="15" height="15" viewBox="0 0 15 15"><rect x="0" y="0.5" width="14" height="3.2" fill="#d0d0d0"/><rect x="4.5" y="5.8" width="9.5" height="3.2" fill="#d0d0d0"/><rect x="4.5" y="11" width="9.5" height="3.2" fill="#d0d0d0"/><path d="M1 5 V12.5 H3.5 M1 7.5 H3.5" stroke="#a0a0a0" stroke-width="0.9" fill="none"/></svg>
<span class="t" style="left:1053px;top:110px;font-size:13px;color:#d8d8d8">大纲</span>
<svg style="left:1163px;top:112px" width="9" height="9" viewBox="0 0 9 9"><path d="M1.2 1.2 L7.8 7.8 M7.8 1.2 L1.2 7.8" stroke="#d8d8d8" stroke-width="1.6"/></svg>
<div class="abs" style="left:1034px;top:138px;width:185px;height:22px;background:#0f0f0f;border:1px solid #353535;border-radius:11px"></div>
<svg style="left:1039px;top:141px" width="16" height="16" viewBox="0 0 16 16"><circle cx="6.8" cy="6.8" r="5.2" fill="none" stroke="#d0d0d0" stroke-width="1.5"/><path d="M10.6 10.6 L15 15" stroke="#d0d0d0" stroke-width="1.7"/></svg>
<span class="t" style="left:1062px;top:142px;font-size:13px;color:#5e5e5e">搜索......</span>
<svg style="left:1229px;top:141px" width="16" height="15" viewBox="0 0 16 15"><path d="M0.5 1.5 H6 L7.5 3.5 H15 V14 H0.5 Z" fill="#d0d0d0"/><path d="M8 5.8 V12 M4.9 8.9 H11.1" stroke="#242424" stroke-width="1.8"/></svg>
<svg style="left:1253px;top:141px" width="16" height="16" viewBox="-11 -11 22 22"><g fill="#d0d0d0"><g id="teeth2"><rect x="-2" y="-10.3" width="4" height="4.5"/><rect x="-2" y="5.8" width="4" height="4.5"/></g><use href="#teeth2" transform="rotate(45)"/><use href="#teeth2" transform="rotate(90)"/><use href="#teeth2" transform="rotate(135)"/></g><circle r="6.4" fill="none" stroke="#d0d0d0" stroke-width="2.6"/><circle r="2.8" fill="none" stroke="#909090" stroke-width="1.2"/></svg>
<!-- header row -->
<div class="abs" style="left:1026px;top:164px;width:237px;height:24px;background:#2f2f2f"></div>
<div class="abs hd" style="left:1050px"></div><div class="abs hd" style="left:1075px"></div><div class="abs hd" style="left:1209px"></div>
<svg style="left:1030px;top:170px" width="16" height="12" viewBox="0 0 16 12"><path d="M0.8 6 Q8 -2 15.2 6 Q8 14 0.8 6 Z" fill="none" stroke="#d0d0d0" stroke-width="1.3"/><circle cx="8" cy="6" r="2.6" fill="#d0d0d0"/></svg>
<svg style="left:1057px;top:167px" width="10" height="17" viewBox="0 0 10 17"><path d="M3 0.5 H7 L6.6 2 V5.5 L9 8.5 V10 H1 V8.5 L3.4 5.5 V2 Z" fill="#d0d0d0"/><path d="M5 10 V16" stroke="#d0d0d0" stroke-width="1.2"/></svg>
<span class="t" style="left:1081px;top:169px;font-size:13px;color:#d0d0d0">项目标签</span>
<svg style="left:1137px;top:173px" width="9" height="6" viewBox="0 0 9 6"><path d="M0.5 5.5 L4.5 0.8 L8.5 5.5 Z" fill="#d0d0d0"/></svg>
<span class="t" style="left:1214px;top:169px;font-size:13px;color:#d0d0d0">类型</span>
<!-- rows -->
<div class="abs" style="left:1026px;top:188px;width:237px;height:136px;background:#1a1a1a;overflow:hidden">
 <div class="abs" style="left:0;top:0;width:183px;height:136px;overflow:hidden">
  <span class="t r" style="left:93px;top:5px">juese1&thinsp;（编辑器</span>
  <span class="t r" style="left:104px;top:25px">cam1</span>
  <span class="t r" style="left:116px;top:45px">CameraRig_Rail</span>
  <span class="t r" style="left:128px;top:65px">CameraRig_Crane</span>
  <span class="t r" style="left:140px;top:85px">cam1</span>
  <span class="t r" style="left:116px;top:105px">xulie1_Blueprint</span>
  <span class="t r" style="left:116px;top:125px">zhuizong</span>
 </div>
 <div class="abs" style="left:191px;top:0;width:46px;height:136px;overflow:hidden">
  <span class="t ty" style="left:0;top:5px">世界场景</span>
  <span class="t ty" style="left:0;top:25px">文件夹</span>
  <span class="t ty" style="left:0;top:45px">CameraRig_Rail</span>
  <span class="t ty" style="left:0;top:65px">CameraRig_Crane</span>
  <span class="t ty" style="left:0;top:85px">CineCameraActor</span>
  <span class="t ty" style="left:2px;top:105px;color:#4f96e8;border-bottom:1px dotted #4f96e8;padding-bottom:1px">编辑xulie1</span>
  <span class="t ty" style="left:0;top:125px">StaticMeshActor</span>
 </div>
 <!-- arrows -->
 <svg style="left:56px;top:8px" width="11" height="7" viewBox="0 0 11 7"><path d="M0.3 0.5 H10.7 L5.5 6.8 Z" fill="#7c7c7c"/></svg>
 <svg style="left:68px;top:28px" width="11" height="7" viewBox="0 0 11 7"><path d="M0.3 0.5 H10.7 L5.5 6.8 Z" fill="#7c7c7c"/></svg>
 <svg style="left:80px;top:48px" width="11" height="7" viewBox="0 0 11 7"><path d="M0.3 0.5 H10.7 L5.5 6.8 Z" fill="#7c7c7c"/></svg>
 <svg style="left:92px;top:68px" width="11" height="7" viewBox="0 0 11 7"><path d="M0.3 0.5 H10.7 L5.5 6.8 Z" fill="#7c7c7c"/></svg>
 <!-- icons -->
 <svg style="left:70px;top:4px" width="16" height="14" viewBox="0 0 16 14"><path d="M2 10.5 L6.5 1 L9 7 L10.8 3.5 L14 10.5 Z" fill="#d0d0d0"/><rect x="0.5" y="11.6" width="15" height="1.5" fill="#d0d0d0"/><path d="M6.5 4 L8.2 8.5" stroke="#1a1a1a" stroke-width="0.8"/></svg>
 <svg style="left:82px;top:25px" width="17" height="13" viewBox="0 0 17 13"><path d="M0.5 0.8 H5.5 L7 2.6 H13.5 V5 H4 L0.5 12 Z" fill="#9a6c34"/><path d="M4.2 5.6 H16.5 L13 12.4 H0.8 Z" fill="#c08c4c"/></svg>
 <svg style="left:93px;top:43px" width="17" height="17" viewBox="0 0 17 17"><rect x="1" y="1" width="10" height="8.5" rx="1" fill="#d6d6d6"/><path d="M11.5 5.2 L16 2 V8.6 L11.5 5.4Z" fill="#d6d6d6"/><path d="M0.5 12 H16" stroke="#d6d6d6" stroke-width="1.2"/><circle cx="4" cy="14.8" r="1.6" fill="#d6d6d6"/><circle cx="12" cy="14.8" r="1.6" fill="#d6d6d6"/></svg>
 <svg style="left:105px;top:63px" width="18" height="17" viewBox="0 0 18 17"><path d="M0.5 1.2 H17 M4.5 1 V16.5 M2 16.5 H7 M15.5 1 V6" stroke="#d6d6d6" stroke-width="1.5" fill="none"/><rect x="8" y="7" width="6" height="5.5" fill="#d6d6d6"/><path d="M14 9.5 L17 7.5 V12 Z" fill="#d6d6d6"/></svg>
 <svg style="left:117px;top:84px" width="17" height="14" viewBox="0 0 17 14"><circle cx="3.6" cy="3" r="2.8" fill="#d6d6d6"/><circle cx="9.2" cy="3" r="2.8" fill="#d6d6d6"/><rect x="0.8" y="6.2" width="11.4" height="7.3" rx="1" fill="#d6d6d6"/><path d="M12.6 9.5 L16.5 7 V13 L12.6 10.5Z" fill="#d6d6d6"/></svg>
 <svg style="left:94px;top:103px" width="17" height="16" viewBox="0 0 17 16"><rect x="0.8" y="7" width="15.5" height="8.5" fill="#9a9a9a"/><rect x="2.3" y="10" width="12.5" height="4.2" fill="#dcdcdc"/><g fill="#dcdcdc" transform="rotate(-17 0.8 7)"><rect x="1.2" y="2.6" width="2" height="3.8"/><rect x="4.8" y="2.6" width="2" height="3.8"/><rect x="8.4" y="2.6" width="2" height="3.8"/><rect x="12" y="2.6" width="2" height="3.8"/><rect x="15.2" y="2.6" width="1.6" height="3.8"/></g></svg>
 <svg style="left:94px;top:124px" width="17" height="14" viewBox="0 0 17 14"><path d="M1 6 L10 1.5 L16 4 L7 8.8 Z M1 6 V9 L7 12 V8.8 M7 12 L16 7 V4" fill="none" stroke="#d0d0d0" stroke-width="1.3"/><path d="M5 6 L11 3.4" stroke="#d0d0d0" stroke-width="1.2"/></svg>
</div>
<div class="abs" style="left:1268px;top:192px;width:7px;height:45px;background:#575757;border-radius:3.5px"></div>
<!-- footer -->
<div class="abs" style="left:1026px;top:324px;width:253px;height:31px;background:#2d2d2d"></div>
<span class="t" style="left:1040px;top:333px;font-size:12.5px;color:#c4c4c4">44个Actor</span>
<!-- details -->
<div class="abs" style="left:1026px;top:358px;width:253px;height:28px;background:#151515"></div>
<div class="abs" style="left:1026px;top:360px;width:123px;height:27px;background:#242424;border-radius:5px 5px 0 0"></div>
<div class="abs" style="left:1026px;top:386px;width:253px;height:301px;background:#242424"></div>
<svg style="left:1030px;top:364px" width="18" height="17" viewBox="0 0 18 17"><path d="M4 12.5 L12.5 3 L15 5.2 L6.5 14.6 L3 15.6 Z" fill="#d6d6d6"/><path d="M13.3 2.2 L14.6 0.8 L17 3 L15.8 4.4 Z" fill="#d6d6d6"/><path d="M1 3 H8 M1 6.5 H5.5 M10 12.5 H17 M8 15.8 H17" stroke="#8a8a8a" stroke-width="1.1"/></svg>
<span class="t" style="left:1053px;top:366px;font-size:13px;color:#d8d8d8">细节</span>
<svg style="left:1127px;top:368px" width="9" height="9" viewBox="0 0 9 9"><path d="M1.2 1.2 L7.8 7.8 M7.8 1.2 L1.2 7.8" stroke="#d8d8d8" stroke-width="1.6"/></svg>
<svg style="left:1156px;top:364px" width="16" height="16" viewBox="0 0 16 16"><circle cx="8" cy="8" r="7.4" fill="#8e8e8e"/><path d="M3 3.5 Q6 1.5 8.5 2.5 Q9 5 6.5 6 Q6 8 4 8.5 Q2 7 3 3.5 Z M8 8.5 Q11 7.5 12.5 9.5 Q12 12.5 10 14 Q8 12.5 8 8.5 Z M11.5 2.5 Q13.5 3.5 14.5 6 Q12.5 6.5 11.5 2.5Z" fill="#dcdcdc"/></svg>
<span class="t" style="left:1178px;top:366px;font-size:13px;color:#c4c4c4">世界场景...</span>
<span class="t" style="left:1092px;top:417px;font-size:10.9px;color:#9a9a9a">选择一个对象来查看细节。</span>
</div>


<div id="sb">
<div class="abs" style="left:4px;top:691px;width:1276px;height:32px;background:#222"></div>
<div class="abs bs" style="left:123px"></div><div class="abs bs" style="left:216px"></div><div class="abs bs" style="left:974px"></div><div class="abs bs" style="left:1088px"></div><div class="abs bs" style="left:1153px"></div>
<svg style="left:14px;top:699px" width="18" height="17" viewBox="0 0 18 17"><path d="M0 0.3 H6 L8 3.5 H0 Z" fill="#8a8a8a"/><path d="M0 3.5 H15 V14 H0 Z" fill="#cdcdcd"/><circle cx="12.2" cy="10" r="4.2" fill="#222" stroke="#222" stroke-width="2.4"/><circle cx="12.2" cy="10" r="3.7" fill="#222" stroke="#d4d4d4" stroke-width="1.3"/><path d="M9.4 13 L6.2 16" stroke="#222" stroke-width="3.4"/><path d="M9.6 12.8 L6.4 15.8" stroke="#d4d4d4" stroke-width="1.5"/></svg>
<span class="t" style="left:35px;top:701px;font-size:12.8px;color:#d4d4d4">内容侧滑菜单</span>
<svg style="left:136px;top:699px" width="13" height="17" viewBox="0 0 13 17"><path d="M0.5 2.5 H3 V0.5 H4.5 V2.5 H8.5 V0.5 H10 V2.5 H12.5 V16.5 H0.5 Z" fill="#d4d4d4"/><path d="M3 7 L6 9.5 L3 12 M7 13 H10" stroke="#1f1f1f" stroke-width="1.4" fill="none"/></svg>
<span class="t" style="left:154px;top:701px;font-size:12.8px;color:#d4d4d4">输出日志</span>
<svg style="left:232px;top:701px" width="17" height="14" viewBox="0 0 17 14"><rect x="0.7" y="0.7" width="15.6" height="12.6" fill="none" stroke="#d4d4d4" stroke-width="1.4"/><path d="M3.5 4.5 L7 7 L3.5 9.5 M8 10 H12.5" stroke="#d4d4d4" stroke-width="1.3" fill="none"/></svg>
<span class="t" style="left:252px;top:701px;font-size:13px;color:#d4d4d4">Cmd</span>
<svg class="chev" style="left:284px;top:704px" width="12" height="8" viewBox="0 0 12 8"><path d="M1.2 1.5 L6 6.3 L10.8 1.5"/></svg>
<div class="abs" style="left:309px;top:696px;width:267px;height:22px;background:#0f0f0f;border:1px solid #343434;border-radius:4px"></div>
<span class="t" style="left:318px;top:701px;font-size:12px;color:#5c5c5c">输入控制台命令</span>
<svg style="left:989px;top:700px" width="15" height="15" viewBox="0 0 15 15"><g fill="#d4d4d4"><rect x="0" y="0.5" width="14.5" height="3.6"/><rect x="0" y="5.5" width="14.5" height="3.6"/><rect x="0" y="10.5" width="14.5" height="3.6"/></g><g fill="#1f1f1f"><rect x="8" y="1.7" width="1.4" height="1.2"/><rect x="10.5" y="1.7" width="2.6" height="1.2"/><rect x="8" y="6.7" width="1.4" height="1.2"/><rect x="10.5" y="6.7" width="2.6" height="1.2"/><rect x="8" y="11.7" width="1.4" height="1.2"/><rect x="10.5" y="11.7" width="2.6" height="1.2"/></g></svg>
<span class="t" style="left:1007px;top:701px;font-size:12.8px;color:#d4d4d4">派生数据</span>
<svg style="left:1070px;top:711px" width="6" height="6" viewBox="0 0 6 6"><path d="M6 0 V6 H0 Z" fill="#8a8a8a"/></svg>
<svg style="left:1103px;top:700px" width="14" height="16" viewBox="0 0 14 16"><g fill="#d4d4d4"><rect x="0" y="0" width="2" height="2"/><rect x="11" y="3" width="2.4" height="2.4"/><rect x="7.4" y="6.5" width="2.4" height="2.4"/><rect x="11" y="6.5" width="2.4" height="2.4"/><rect x="3.8" y="10" width="2.4" height="2.4"/><rect x="7.4" y="10" width="2.4" height="2.4"/><rect x="11" y="10" width="2.4" height="2.4"/><rect x="0.2" y="13.5" width="2.4" height="2.4"/><rect x="3.8" y="13.5" width="2.4" height="2.4"/><rect x="7.4" y="13.5" width="2.4" height="2.4"/><rect x="11" y="13.5" width="2.4" height="2.4"/></g></svg>
<svg style="left:1137px;top:700px" width="4" height="16" viewBox="0 0 4 16"><circle cx="2" cy="2" r="1.4" fill="#d4d4d4"/><circle cx="2" cy="8" r="1.4" fill="#d4d4d4"/><circle cx="2" cy="14" r="1.4" fill="#d4d4d4"/></svg>
<svg style="left:1166px;top:699px" width="17" height="17" viewBox="0 0 17 17"><circle cx="8.5" cy="8.5" r="7.2" fill="none" stroke="#d4d4d4" stroke-width="1.5"/><path d="M3.6 13.4 L13.4 3.6" stroke="#d4d4d4" stroke-width="1.5"/></svg>
<span class="t" style="left:1187px;top:701px;font-size:12.8px;color:#d4d4d4">源码管理关闭</span>
<svg style="left:1270px;top:711px" width="6" height="6" viewBox="0 0 6 6"><path d="M6 0 V6 H0 Z" fill="#8a8a8a"/></svg>
</div>

</body></html>
